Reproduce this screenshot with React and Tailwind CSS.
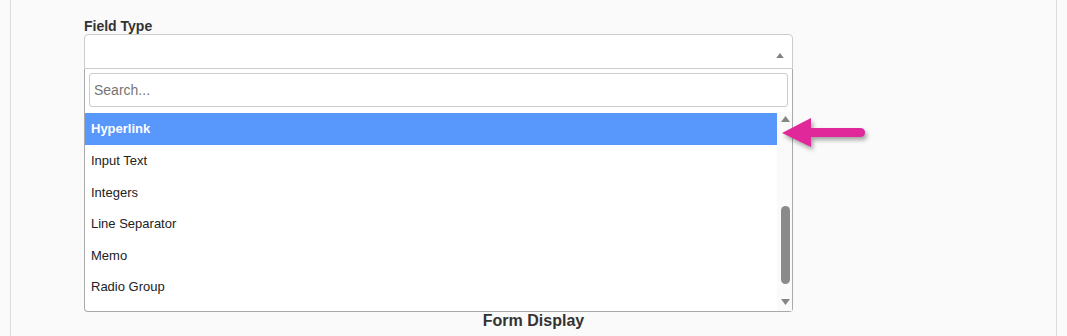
const options = ["Hyperlink", "Input Text", "Integers", "Line Separator", "Memo", "Radio Group"];

const Triangle = ({ up = true, className = "" }) => (
  <svg width="9" height="6" viewBox="0 0 9 6" className={className}>
    {up ? <path d="M4.5 0 L9 6 L0 6 Z" fill="currentColor" /> : <path d="M0 0 L9 0 L4.5 6 Z" fill="currentColor" />}
  </svg>
);

const PinkArrow = () => (
  <svg
    width="100"
    height="45"
    viewBox="0 0 100 45"
    className="absolute left-[775px] top-[110px] z-20 drop-shadow-[2px_3px_2px_rgba(0,0,0,0.35)]"
  >
    <path d="M7 23 L36 8 L36 18 L85 18 Q90 18 90 22.5 Q90 27 85 27 L36 27 L36 37 Z" fill="#e0289b" />
  </svg>
);

const App = () => {
  return (
    <div className="relative h-[336px] w-[1067px] overflow-hidden bg-[#fafafa] font-['Liberation_Sans',Arial,sans-serif]">
      <div className="mx-[10px] h-full border-x border-[#dddddd] bg-[#fafafa] pt-[17px]">
        <div className="pl-[73px]">
          <div className="h-[17px] text-[14px] font-bold leading-[18px] text-[#333333]">Field Type</div>
          <div className="relative w-[709px]">
            <div className="flex h-[35px] items-start justify-end rounded-t-[4px] border border-[#cccccc] bg-white pr-[8px] pt-[18px] text-[#808080]">
              <Triangle up className="h-[5px] w-[8px]" />
            </div>
            <div className="absolute left-0 right-0 top-full z-10 rounded-b-[4px] border border-t-0 border-[#aaaaaa] bg-white">
              <div className="p-[4px] pb-[5px]">
                <div className="flex h-[34px] items-center rounded-[3px] border border-[#cccccc] px-[4px] text-[14px] text-[#757575]">
                  Search...
                </div>
              </div>
              <div className="flex h-[199px]">
                <div className="flex-1 pt-px">
                  {options.map((opt, i) => (
                    <div
                      key={opt}
                      className={`flex items-center pl-[6px] text-[13px] ${
                        i === 0 ? "h-[32px] bg-[#5897fb] font-bold text-white" : "h-[31.6px] text-[#222222]"
                      }`}
                    >
                      {opt}
                    </div>
                  ))}
                </div>
                <div className="flex w-[15px] flex-col items-center bg-[#fafafa] pl-px pt-[4px] text-[#858585]">
                  <Triangle up />
                  <div className="mt-[84px] h-[78px] w-[9px] rounded-full bg-[#8a8a8a]" />
                  <Triangle up={false} className="mt-[15px]" />
                </div>
              </div>
            </div>
          </div>
        </div>
        <div className="mt-[242px] text-center text-[16px] font-bold leading-[20px] text-[#333333]">Form Display</div>
      </div>
      <PinkArrow />
    </div>
  );
};

export default App;
